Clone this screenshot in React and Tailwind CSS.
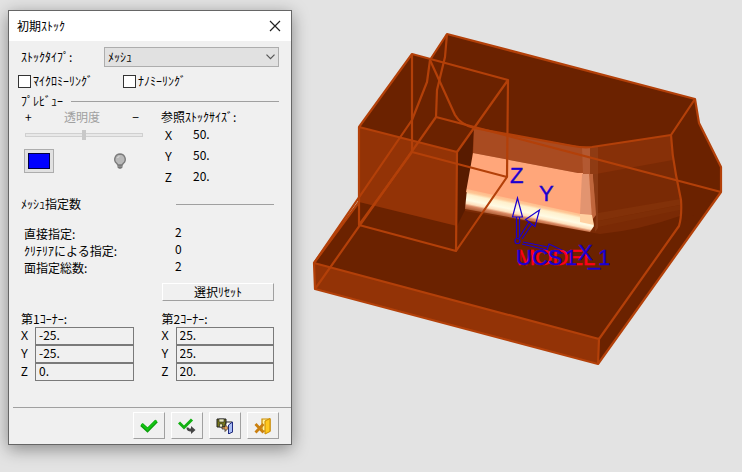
import React from "react";

const face = "font-['Noto_Sans_CJK_JP',sans-serif]";

function Legend({ children, rule }) {
  return (
    <div className="flex h-4 items-center justify-between">
      <h2 className="whitespace-nowrap">{children}</h2>
      <hr className={`${rule} border-0 border-t border-[#a0a0a0]`} />
    </div>
  );
}

function Check({ label }) {
  return (
    <label className="flex items-center gap-0.5">
      <input type="checkbox" className="size-[13px] appearance-none border border-[#333] bg-white checked:bg-[#333]" />
      {label}
    </label>
  );
}

function Corner({ title, values, id }) {
  return (
    <fieldset className="min-w-0">
      <legend className="h-4 leading-4">{title}</legend>
      {["X", "Y", "Z"].map((axis, i) => (
        <div key={axis} className="flex h-[18px] items-center">
          <label htmlFor={id + axis} className="w-3.5 shrink-0 font-['Noto_Sans',sans-serif]">{axis}</label>
          <input
            id={id + axis}
            defaultValue={values[i]}
            className="h-[18px] w-full min-w-0 border border-[#7a7a7a] bg-[#f0f0f0] px-[3px] pb-[3px] leading-3 outline-none"
          />
        </div>
      ))}
    </fieldset>
  );
}

function ToolButton({ label, children }) {
  return (
    <button
      type="button"
      aria-label={label}
      className="flex h-[27px] w-8 items-center justify-center border border-t-white border-r-[#a0a0a0] border-b-[#a0a0a0] border-l-white bg-[#f0f0f0]"
    >
      {children}
    </button>
  );
}

function StockDialog() {
  return (
    <form className="relative flex w-[284px] shrink-0 flex-col self-start border border-[#666] bg-[#f0f0f0] shadow-[0_4px_16px_rgba(0,0,0,0.4)]">
      <header className="flex h-[30px] items-center justify-between bg-white pr-2.5 pl-2">
        <h1>初期ｽﾄｯｸ</h1>
        <button type="button" aria-label="閉じる">
          <svg width="12" height="12" viewBox="0 0 12 12" fill="none" stroke="#222" strokeWidth="1.2">
            <path d="M1 1l10 10M11 1L1 11" />
          </svg>
        </button>
      </header>

      <div className="px-3 pt-1.5">
        <div className="flex h-5 items-center justify-between">
          <label htmlFor="stock-type">ｽﾄｯｸﾀｲﾌﾟ:</label>
          <div className="grid w-[175px] items-center">
            <select id="stock-type" className="col-start-1 row-start-1 h-5 w-full appearance-none border border-[#adadad] bg-[#e1e1e1] px-[3px]">
              <option>ﾒｯｼｭ</option>
            </select>
            <svg className="pointer-events-none col-start-1 row-start-1 mr-1 justify-self-end" width="9" height="6" viewBox="0 0 9 6" fill="none" stroke="#555" strokeWidth="1.2">
              <path d="M0.5 0.7l4 4 4-4" />
            </svg>
          </div>
        </div>

        <div className="mt-1 -ml-[3px] grid h-5 grid-cols-[105px_1fr] items-center">
          <Check label="ﾏｲｸﾛﾐｰﾘﾝｸﾞ" />
          <Check label="ﾅﾉﾐｰﾘﾝｸﾞ" />
        </div>

        <div className="mt-0.5">
          <Legend rule="w-[208px]">ﾌﾟﾚﾋﾞｭｰ</Legend>
        </div>

        <div className="grid grid-cols-[140px_1fr]">
          <div className="pr-[18px] pl-1">
            <div className="flex h-4 items-center justify-between pr-1">
              <span>+</span>
              <label htmlFor="opacity" className="text-[#a0a0a0]">透明度</label>
              <span>−</span>
            </div>
            <div className="flex h-5 items-center">
              <input
                id="opacity"
                type="range"
                disabled
                className="h-1 w-full appearance-none border border-[#d0d0d0] bg-[#e8e8e8] [&::-webkit-slider-thumb]:h-[10px] [&::-webkit-slider-thumb]:w-1 [&::-webkit-slider-thumb]:appearance-none [&::-webkit-slider-thumb]:bg-[#c8c8c8]"
              />
            </div>
            <div className="mt-1 flex items-center justify-between pr-4">
              <button type="button" aria-label="色" className="-ml-px flex h-6 w-[30px] items-center justify-center border border-[#adadad] bg-[#e1e1e1]">
                <span className="h-4 w-[22px] border border-[#00003c] bg-[#0000ff]" />
              </button>
              <button type="button" aria-label="表示">
                <svg width="14" height="16" viewBox="0 0 14 16">
                  <path d="M7 1a5.300 5.300 0 0 0-3.400 9.300L5 12h4l1.400-1.700A5.300 5.300 0 0 0 7 1z" fill="#b9b9b9" stroke="#7c7c7c" strokeWidth="1.4" />
                  <path d="M4.500 12h5v2.500l-1.500 1.300h-2l-1.500-1.300z" fill="#777" />
                  <path d="M4.500 13.300h5" stroke="#aaa" strokeWidth=".6" />
                  <path d="M4.500 5a3 3 0 0 1 2-1.700" stroke="#e0e0e0" fill="none" />
                </svg>
              </button>
            </div>
          </div>

          <section>
            <h3 className="h-4 leading-4">参照ｽﾄｯｸｻｲｽﾞ:</h3>
            <dl>
              {[["X", "50."], ["Y", "50."], ["Z", "20."]].map(([axis, size]) => (
                <div key={axis} className="flex h-[21px] items-center pl-1">
                  <dt className="w-7 font-['Noto_Sans',sans-serif]">{axis}</dt>
                  <dd className="pb-1">{size}</dd>
                </div>
              ))}
            </dl>
          </section>
        </div>

        <div className="mt-2">
          <Legend rule="mr-[5px] w-[98px]">ﾒｯｼｭ指定数</Legend>
        </div>

        <dl className="mt-3 pl-[3px]">
          {[["直接指定:", "2"], ["ｸﾘﾃﾘｱによる指定:", "0"], ["面指定総数:", "2"]].map(([name, count]) => (
            <div key={name} className="grid h-[17px] grid-cols-[151px_1fr] items-center">
              <dt>{name}</dt>
              <dd className="pb-1">{count}</dd>
            </div>
          ))}
        </dl>

        <div className="mt-2 flex justify-end pr-[5px]">
          <button type="button" className="h-[18px] w-[112px] border border-t-white border-r-[#a0a0a0] border-b-[#a0a0a0] border-l-white bg-[#f0f0f0] leading-4">
            選択ﾘｾｯﾄ
          </button>
        </div>

        <div className="mt-2.5 grid grid-cols-2 gap-7 pr-[5px]">
          <Corner id="c1" title="第1ｺｰﾅｰ:" values={["-25.", "-25.", "0."]} />
          <Corner id="c2" title="第2ｺｰﾅｰ:" values={["25.", "25.", "20."]} />
        </div>
      </div>

      <footer className="mt-[26px] ml-1 flex justify-end gap-1.5 border-t border-[#a0a0a0] pt-1 pr-3 pb-[5px]">
        <ToolButton label="OK">
          <svg width="18" height="14" viewBox="0 0 18 14">
            <path d="M1.500 5.500l6 5.500L16.500 2" fill="none" stroke="#0a9c0a" strokeWidth="3.8" />
            <path d="M1.500 5l6 5.500L16.500 1.500" fill="none" stroke="#14c414" strokeWidth="2" />
          </svg>
        </ToolButton>
        <ToolButton label="適用">
          <svg width="18" height="16" viewBox="0 0 18 16">
            <path d="M1 4.500l5 5L14 1.500" fill="none" stroke="#12b012" strokeWidth="3" />
            <path d="M8.500 9.500c0 3 2 4 4.500 4v2.500l4.500-4-4.500-4v2.500c-1.500 0-2.500 0-2.500-1z" fill="#444" />
          </svg>
        </ToolButton>
        <ToolButton label="保存して終了">
          <svg width="18" height="16" viewBox="0 0 18 16">
            <path d="M1 1h9v8H1z" fill="#77771c" stroke="#222" />
            <path d="M3 1h5v3H3zM3.500 6h3v3h-3z" fill="#ececc0" stroke="#222" strokeWidth=".6" />
            <path d="M10 6.500V4h6v10.500h-4" fill="#fff" stroke="#222" />
            <path d="M12.500 7l4-3v10l-4 2z" fill="#a9bdf5" stroke="#1f2a80" />
            <path d="M6 9h3V6.500L12.500 10 9 13.500V11H6z" fill="#e3a25a" stroke="#222" strokeWidth=".7" />
          </svg>
        </ToolButton>
        <ToolButton label="キャンセル">
          <svg width="18" height="18" viewBox="0 0 18 18">
            <path d="M8 2h8v12H8z" fill="#fff2a0" stroke="#c98a00" strokeWidth="1.2" />
            <path d="M11 4l5-2.500v13L11 17z" fill="#ffc81e" stroke="#c98a00" />
            <path d="M1.500 7l8 8.500M9.500 7l-8 8.500" stroke="#ca8010" strokeWidth="2.800" />
          </svg>
        </ToolButton>
      </footer>
    </form>
  );
}

function ModelView() {
  return (
    <svg viewBox="292 0 450 472" className="block min-w-0 flex-1 self-start" role="img" aria-label="3D">
      <defs>
        <linearGradient id="shine" gradientUnits="userSpaceOnUse" x1="520" y1="198" x2="515" y2="222">
          <stop offset="0" stopColor="#ffad80" />
          <stop offset=".2" stopColor="#ffc896" />
          <stop offset=".3" stopColor="#fff0cc" />
          <stop offset=".52" stopColor="#fffbe4" />
          <stop offset=".66" stopColor="#ffe0bd" />
          <stop offset=".74" stopColor="#d98862" />
          <stop offset="1" stopColor="#87380f" />
        </linearGradient>
      </defs>

      {/* solid silhouette */}
      <path d="M447 34L695 99L699 123L721 167V192L598 364L315 289L314 263L359 202V127L412 54L430 59Z" fill="#6b2200" />
      <path d="M314 263L599 339L598 364L315 289Z" fill="#933306" />
      <path d="M359 127L457 152V226L359 202Z" fill="#933306" />
      <path d="M599 339L681 225L721 192L598 364Z" fill="#6b2200" />
      <path d="M457 152L474 128L473 153L466 208L457 226Z" fill="#581b00" />

      {/* blended wall */}
      <path d="M474 128L582 147L590 147L671 135L673 160L680 197V216Q640 230 600 234L465 211Q472 170 474 128Z" fill="#7a2a05" />
      <path d="M594 147L671 135L673 160L596 174Z" fill="#873008" />
      <path d="M598 213L680 199V205L598 221Z" fill="#823109" />
      <path d="M598 221L680 205V210L598 227Z" fill="#7e2e07" />
      <path d="M474 128L582 147L592 147V174L578 173L473 153Z" fill="#a94b21" />
      <path d="M473 153L578 173H590L594 214L590 220L466 192Z" fill="#ffa67a" />
      <path d="M467 189L590 216L594 226L590 232L465 209Z" fill="url(#shine)" />
      <path d="M582 147L590 147V174H583Z" fill="#b35932" />
      <path d="M590 147L598 146V174H590Z" fill="#8f3b13" />
      <path d="M582 174H589L592 215L580 214Z" fill="#e29470" />
      <path d="M589 174L593 174L597 214L592 220Z" fill="#c0663c" />
      <path d="M593 174H598V228L595 232L596 214Z" fill="#8a3a14" />
      <path d="M580 214L592 215L594 225L580 222Z" fill="#ffd1a2" />

      {/* edges */}
      <g fill="none" stroke="#b34009" strokeWidth="2.2" strokeLinejoin="round">
        <path d="M430 60L447 34L695 99L699 123L721 167V192L598 364L315 289L314 263L359 202" />
        <path d="M314 263L599 339L598 364M599 339L679 226Q682 216 681 200L676 175Q672 155 671 135L695 99" />
        <path d="M671 135L592 147Q583 148 573 146L474 128Q460 124 455 115L430 60" />
        <path d="M430 60L427 82L412 120L314 263" />
        <path d="M447 34L445 57L437 90L436 117L721 192M436 117L315 289" />
        <path d="M359 127L412 54L508 80L457 152ZM359 127V225L456 251L457 152M508 80L507 177L456 251M412 54V152L507 177M412 152L359 225" />
      </g>

      {/* coordinate triad */}
      <g fill="none" stroke="#1a00d0" strokeWidth="1.2">
        <circle cx="517.5" cy="241" r="2.500" />
        <path d="M516.500 238V217M519.500 238V217M517.500 198L512.500 217H522.500Z" />
        <path d="M519 238L529 222M522 239L532 224M539.500 210L525.500 219.500L535 226.500Z" />
        <path d="M523 242L548 247M522 244L547 250M568 253L549 244L546 253Z" />
      </g>
      <g className="font-['Liberation_Sans',Arial,sans-serif] text-[22px]">
        <text x="517" y="265" fill="#ff0018" stroke="#ff0018" strokeWidth=".4">MODEL</text>
        <g fill="#1a00d0" stroke="#1a00d0" strokeWidth=".4">
          <text x="516" y="265">UCS</text>
          <text x="565" y="265">1</text>
          <text x="588" y="265">_</text>
          <text x="598" y="265">1</text>
          <text x="578" y="260">X</text>
          <text x="510" y="183">Z</text>
          <text x="539" y="201">Y</text>
        </g>
      </g>
    </svg>
  );
}

export default function App() {
  return (
    <main className={`${face} flex min-h-screen overflow-hidden bg-[#e3e3e3] text-[12px] leading-4 text-black`}>
      <div className="flex shrink-0 pt-2.5 pl-2">
        <StockDialog />
      </div>
      <ModelView />
    </main>
  );
}
